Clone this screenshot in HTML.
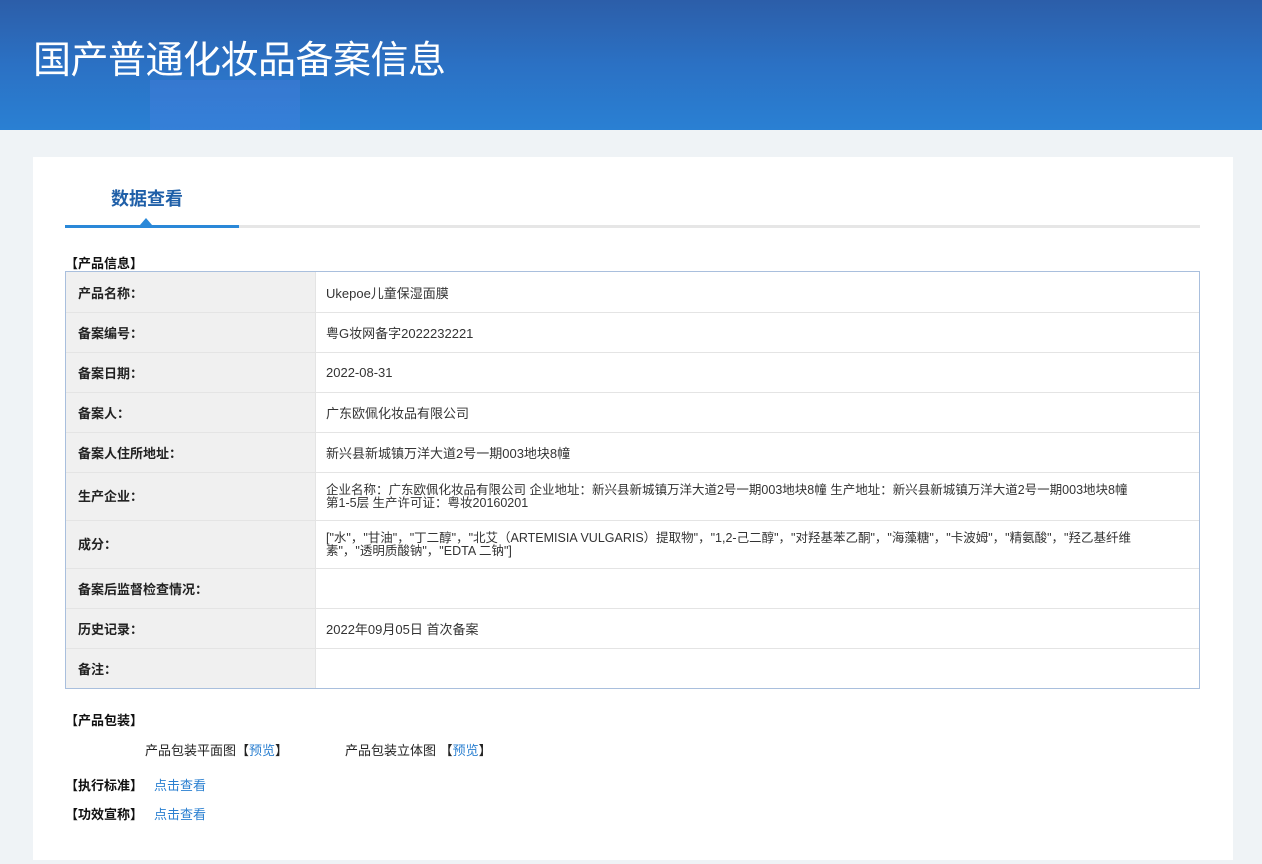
<!DOCTYPE html>
<html><head><meta charset="utf-8"><style>
*{margin:0;padding:0;box-sizing:border-box}
body{width:1262px;height:864px;background:#eff3f6;font-family:"Liberation Sans","Noto Sans CJK SC",sans-serif;font-size:13px;color:#333;position:relative;overflow:hidden}
.hd{position:absolute;left:0;top:0;width:1262px;height:130px;background:linear-gradient(180deg,#2c5ea9 0%,#2b71c4 50%,#2a80d3 100%);overflow:hidden}
.hd h1{position:absolute;left:33px;top:33px;font-size:38px;font-weight:normal;color:#fff;letter-spacing:-0.5px;font-family:"Noto Sans CJK SC",sans-serif;line-height:48px}
.blob{position:absolute;background:rgba(255,255,255,.05)}
.card{position:absolute;left:33px;top:157px;width:1200px;height:703px;background:#fff}
.tab{position:absolute;left:78px;top:28px;font-size:18px;font-weight:bold;color:#1f5fa8}
.line{position:absolute;left:32px;top:68px;width:1135px;height:3px;background:#e6e6e6}
.line i{position:absolute;left:0;top:0;width:174px;height:3px;background:#2a88d8}
.tri{position:absolute;left:107px;top:61px;width:0;height:0;border-left:6px solid transparent;border-right:6px solid transparent;border-bottom:7px solid #2a88d8}
.sec{position:absolute;font-weight:bold;color:#111;font-size:13px}
table{position:absolute;left:32px;top:114px;width:1135px;border-collapse:separate;border-spacing:0;border:1px solid #a9bfdd}
td{border-top:1px solid #e4e4e4;height:40px;vertical-align:middle;font-size:13px}
td.l{width:250px;background:#f0f0f0;font-weight:bold;color:#222;padding-left:12px;border-right:1px solid #e4e4e4}
td.v{padding-left:10px;color:#333}
td.m{height:48px;line-height:13px;font-size:12.5px}
td.m div{width:805px}
.t{position:absolute;color:#222}
.a{color:#2a7fd0}
</style></head><body>
<div class="hd">
<div class="blob" style="left:150px;top:80px;width:150px;height:60px;background:rgba(80,130,230,.3)"></div>
<h1>国产普通化妆品备案信息</h1>
</div>
<div class="card">
<div class="tab">数据查看</div>
<div class="line"><i></i></div>
<div class="tri"></div>
<div class="sec" style="left:32px;top:96px">【产品信息】</div>
<table>
<tr><td class="l" style="border-top:0">产品名称：</td><td class="v" style="border-top:0">Ukepoe儿童保湿面膜</td></tr>
<tr><td class="l">备案编号：</td><td class="v">粤G妆网备字2022232221</td></tr>
<tr><td class="l">备案日期：</td><td class="v">2022-08-31</td></tr>
<tr><td class="l">备案人：</td><td class="v">广东欧佩化妆品有限公司</td></tr>
<tr><td class="l">备案人住所地址：</td><td class="v">新兴县新城镇万洋大道2号一期003地块8幢</td></tr>
<tr><td class="l m" style="font-size:13px">生产企业：</td><td class="v m"><div>企业名称：广东欧佩化妆品有限公司 企业地址：新兴县新城镇万洋大道2号一期003地块8幢 生产地址：新兴县新城镇万洋大道2号一期003地块8幢第1-5层 生产许可证：粤妆20160201</div></td></tr>
<tr><td class="l m" style="font-size:13px">成分：</td><td class="v m"><div>["水"，"甘油"，"丁二醇"，"北艾（ARTEMISIA VULGARIS）提取物"，"1,2-己二醇"，"对羟基苯乙酮"，"海藻糖"，"卡波姆"，"精氨酸"，"羟乙基纤维素"，"透明质酸钠"，"EDTA 二钠"]</div></td></tr>
<tr><td class="l">备案后监督检查情况：</td><td class="v"></td></tr>
<tr><td class="l">历史记录：</td><td class="v">2022年09月05日 首次备案</td></tr>
<tr><td class="l">备注：</td><td class="v"></td></tr>
</table>
<div class="sec" style="left:32px;top:553px">【产品包装】</div>
<div class="t" style="left:112px;top:583px">产品包装平面图【<span class="a">预览</span>】</div>
<div class="t" style="left:312px;top:583px">产品包装立体图 【<span class="a">预览</span>】</div>
<div class="sec" style="left:32px;top:618px">【执行标准】</div>
<div class="t a" style="left:121px;top:618px">点击查看</div>
<div class="sec" style="left:32px;top:647px">【功效宣称】</div>
<div class="t a" style="left:121px;top:647px">点击查看</div>
</div>
</body></html>
